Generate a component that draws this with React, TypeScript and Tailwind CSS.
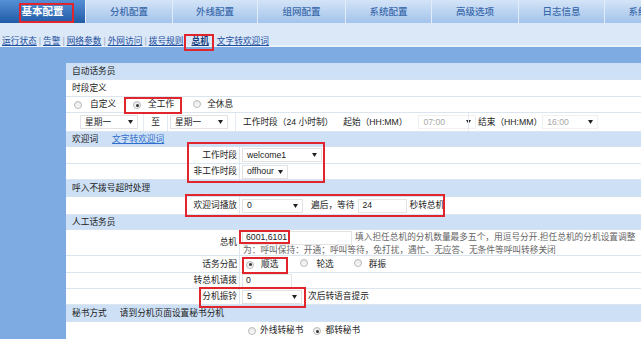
import React from "react";

const tabs = [
  { t: "基本配置", w: "w-[86px]", active: true },
  { t: "分机配置", w: "w-[87px]", active: false },
  { t: "外线配置", w: "w-[85px]", active: false },
  { t: "组网配置", w: "w-[88px]", active: false },
  { t: "系统配置", w: "w-[86px]", active: false },
  { t: "高级选项", w: "w-[87px]", active: false },
  { t: "日志信息", w: "w-[86px]", active: false },
  { t: "系统工具", w: "w-[86px]", active: false },
];

function Tri() {
  return (
    <svg width="5" height="4" viewBox="0 0 5 4" className="shrink-0">
      <path d="M0 0H5L2.5 4Z" fill="#222" />
    </svg>
  );
}

function Select({ cls, text, gray }: { cls: string; text: string; gray?: boolean }) {
  return (
    <span
      className={`inline-flex h-[14px] shrink-0 items-center justify-between border border-[#e2e2e2] bg-white pl-[4px] pr-[4px] ${cls}`}
    >
      <span className={gray ? "text-[#a8a8a8]" : "text-[#222]"}>{text}</span>
      <Tri />
    </span>
  );
}

function Input({ cls, text }: { cls: string; text: string }) {
  return (
    <span
      className={`inline-flex h-[14px] shrink-0 items-center border border-[#e4e4e4] bg-white pl-[3px] text-[#222] ${cls}`}
    >
      {text}
    </span>
  );
}

function Radio({ checked }: { checked?: boolean }) {
  return (
    <span className="inline-flex h-[8px] w-[8px] shrink-0 items-center justify-center rounded-full border border-[#b9b9b9] bg-gradient-to-b from-[#e8e8e8] to-[#fafafa]">
      {checked && <span className="h-[3px] w-[3px] rounded-full bg-[#333]" />}
    </span>
  );
}

function Header({ h, children }: { h: string; children: React.ReactNode }) {
  return (
    <div className={`flex ${h} items-center border-b border-[#d3e1f0] bg-[#cde0f5] pl-[6px] text-[#222]`}>
      {children}
    </div>
  );
}

function LRow({ h, label, children }: { h: string; label: string; children: React.ReactNode }) {
  return (
    <div className={`flex ${h} border-b border-[#dbe5f0]`}>
      <div className="flex w-[173px] shrink-0 items-center justify-end pr-[2px] text-[#222]">{label}</div>
      <div className="flex flex-1 items-center border-l border-[#dfe6ee] pl-[2px]">{children}</div>
    </div>
  );
}

function RedBox({ cls }: { cls: string }) {
  return <div className={`pointer-events-none absolute border-2 border-[#e0262c] ${cls}`} />;
}

export default function App() {
  return (
    <div className="relative h-[339px] w-[641px] overflow-hidden bg-[#7eace2] font-['Liberation_Sans','Noto_Sans_CJK_SC',sans-serif] text-[8.7px] leading-none text-[#333]">
      {/* top nav */}
      <div className="flex h-[23px] bg-gradient-to-b from-[#d4e4f7] to-[#a3c3eb]">
        {tabs.map((tab) => (
          <div
            key={tab.t}
            className={`flex shrink-0 items-center justify-center border-r border-[#e3edf9] ${tab.w} ${
              tab.active
                ? "bg-gradient-to-b from-[#5590d6] to-[#1f5ba7] text-[10.5px] font-bold text-white"
                : "text-[9.5px] font-medium text-[#3b6aab]"
            }`}
          >
            {tab.t}
          </div>
        ))}
      </div>

      {/* sub nav */}
      <div className="flex h-[24px] items-end bg-[linear-gradient(to_bottom,#dbe8f8_0%,#dbe8f8_90%,#eaf2fb_90%)] pb-[1px] pl-[2px] text-[#1d4f9e]">
        <span className="underline">运行状态</span>
        <span className="mx-[2px] text-[#9aa8b8]">|</span>
        <span className="underline">告警</span>
        <span className="mx-[2px] text-[#9aa8b8]">|</span>
        <span className="underline">网络参数</span>
        <span className="mx-[2px] text-[#9aa8b8]">|</span>
        <span className="underline">外网访问</span>
        <span className="mx-[2px] text-[#9aa8b8]">|</span>
        <span className="underline">拨号规则</span>
        <span className="ml-[8px] font-bold text-[#173f80] underline">总机</span>
        <span className="ml-[8px] underline">文字转欢迎词</span>
      </div>

      {/* content */}
      <div className="pl-[66px] pt-[16px]">
        <div className="bg-white">
          <Header h="h-[17px]">自动话务员</Header>
          <div className="flex h-[17px] items-center border-b border-[#dbe5f0] pl-[6px] text-[#222]">时段定义</div>
          <div className="flex h-[16px] items-center border-b border-[#dbe5f0] pl-[8px] text-[#222]">
            <Radio />
            <span className="ml-[8px]">自定义</span>
            <span className="ml-[17px]">
              <Radio checked />
            </span>
            <span className="ml-[7px]">全工作</span>
            <span className="ml-[19px]">
              <Radio />
            </span>
            <span className="ml-[6px]">全休息</span>
          </div>
          <div className="flex h-[19px] border-b border-[#dbe5f0] text-[#222]">
            <div className="flex w-[77px] shrink-0 items-center pl-[14px]">
              <Select cls="w-[58px]" text="星期一" />
            </div>
            <div className="flex w-[24px] shrink-0 items-center justify-center border-l border-[#e4eaf1]">至</div>
            <div className="flex w-[68px] shrink-0 items-center border-l border-[#e4eaf1] pl-[2px]">
              <Select cls="w-[58px]" text="星期一" />
            </div>
            <div className="flex w-[233px] shrink-0 items-center border-l border-[#e4eaf1] pl-[7px]">
              <span className="whitespace-nowrap">工作时段（24 小时制）</span>
              <span className="ml-[10px] whitespace-nowrap">起始（HH:MM）</span>
              <Select cls="ml-[11px] w-[58px] border-[#f0f0f0]" text="07:00" gray />
            </div>
            <div className="flex flex-1 items-center border-l border-[#e4eaf1] pl-[9px]">
              <span className="whitespace-nowrap">结束（HH:MM）</span>
              <Select cls="ml-[0px] w-[56px] border-[#f0f0f0]" text="16:00" gray />
            </div>
          </div>

          <Header h="h-[15px]">
            <span>欢迎词</span>
            <span className="ml-[14px] text-[#2f6fcd] underline">文字转欢迎词</span>
          </Header>
          <LRow h="h-[17px]" label="工作时段">
            <Select cls="w-[80px]" text="welcome1" />
          </LRow>
          <LRow h="h-[16px]" label="非工作时段">
            <Select cls="w-[46px]" text="offhour" />
          </LRow>

          <Header h="h-[17px]">呼入不拨号超时处理</Header>
          <LRow h="h-[18px]" label="欢迎词播放">
            <Select cls="w-[61px]" text="0" />
            <span className="ml-[8px] whitespace-nowrap text-[#222]">遍后，等待</span>
            <Input cls="ml-[4px] w-[49px]" text="24" />
            <span className="ml-[2px] whitespace-nowrap text-[#222]">秒转总机</span>
          </LRow>

          <Header h="h-[15px]">人工话务员</Header>
          <div className="flex h-[26px] border-b border-[#dbe5f0]">
            <div className="flex w-[173px] shrink-0 items-center justify-end pr-[2px] text-[#222]">总机</div>
            <div className="flex-1 border-l border-[#dfe6ee] pl-[2px] pt-[1px] text-[#666]">
              <div className="flex h-[13px] items-center whitespace-nowrap">
                <Input cls="h-[12px] w-[110px]" text="6001,6101" />
                <span className="ml-[3px]">填入担任总机的分机数量最多五个，用逗号分开.担任总机的分机设置调整</span>
              </div>
              <div className="flex h-[12px] items-center whitespace-nowrap pl-[1px]">
                为：呼叫保持：开通；呼叫等待，免打扰，遇忙、无应答、无条件等呼叫转移关闭
              </div>
            </div>
          </div>
          <LRow h="h-[17px]" label="话务分配">
            <span className="ml-[4px]">
              <Radio checked />
            </span>
            <span className="ml-[7px] text-[#222]">顺选</span>
            <span className="ml-[22px]">
              <Radio />
            </span>
            <span className="ml-[8px] text-[#222]">轮选</span>
            <span className="ml-[20px]">
              <Radio />
            </span>
            <span className="ml-[7px] text-[#222]">群振</span>
          </LRow>
          <LRow h="h-[16px]" label="转总机请拨">
            <Input cls="w-[50px]" text="0" />
          </LRow>
          <LRow h="h-[16px]" label="分机振铃">
            <Select cls="w-[60px]" text="5" />
            <span className="ml-[6px] whitespace-nowrap text-[#222]">次后转语音提示</span>
          </LRow>

          <Header h="h-[17px]">
            <span>秘书方式</span>
            <span className="ml-[13px]">请到分机页面设置秘书分机</span>
          </Header>
          <div className="flex h-[17px] items-center pl-[182px] text-[#222]">
            <Radio />
            <span className="ml-[4px]">外线转秘书</span>
            <span className="ml-[10px]">
              <Radio checked />
            </span>
            <span className="ml-[4px]">都转秘书</span>
          </div>
        </div>
      </div>

      {/* annotation boxes */}
      <RedBox cls="left-[19px] top-[3px] h-[20px] w-[55px]" />
      <RedBox cls="left-[184px] top-[34px] h-[17px] w-[30px]" />
      <RedBox cls="left-[124px] top-[97px] h-[17px] w-[58px]" />
      <RedBox cls="left-[187px] top-[142px] h-[41px] w-[138px]" />
      <RedBox cls="left-[185px] top-[194px] h-[23px] w-[260px]" />
      <RedBox cls="left-[239px] top-[230px] h-[14px] w-[51px]" />
      <RedBox cls="left-[242px] top-[257px] h-[17px] w-[46px]" />
      <RedBox cls="left-[199px] top-[287px] h-[21px] w-[107px]" />
    </div>
  );
}
